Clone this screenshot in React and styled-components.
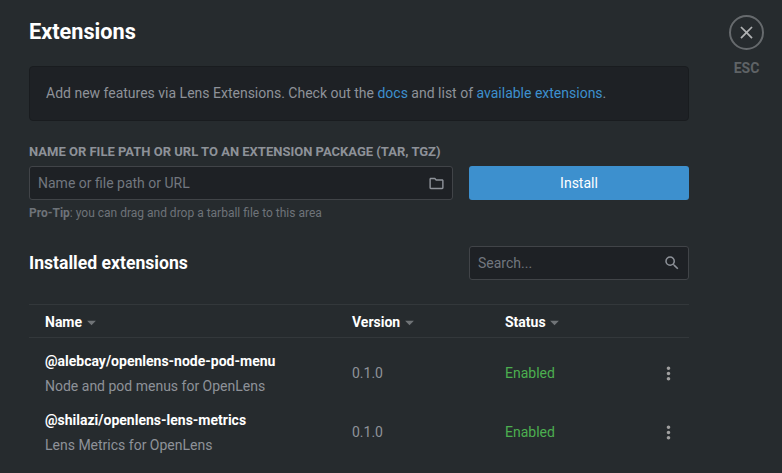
import React from "react";
import styled, { createGlobalStyle } from "styled-components";
import { MdArrowDropDown, MdClose, MdMoreVert, MdOutlineFolder, MdSearch } from "react-icons/md";

const GlobalStyle = createGlobalStyle`
  *, *::before, *::after { box-sizing: border-box; }
  body {
    margin: 0;
    background: #262b2e;
    color: #8e9299;
    font: 14px/20px Roboto, sans-serif;
    overflow: hidden;
  }
  h1, h2, p { margin: 0; }
`;

const Page = styled.div`
  display: flex;
  width: 782px;
  height: 473px;
  background: #262b2e;
`;

const Content = styled.main`
  display: flex;
  flex-direction: column;
  width: 660px;
  margin-left: 29px;
  padding-top: 18px;
`;

const Title = styled.h1`
  color: #fff;
  font-size: 21.7px;
  line-height: 28px;
  font-weight: 700;
`;

const Notice = styled.p`
  height: 55px;
  margin-top: 20px;
  padding: 16px;
  border: 1px solid #191c1f;
  border-radius: 4px;
  background: #1e2125;
`;

const Link = styled.a`
  color: #3d90ce;
  text-decoration: none;
`;

const Label = styled.label`
  margin-top: 21px;
  font-size: 13px;
  font-weight: 700;
  text-transform: uppercase;
`;

const InstallRow = styled.div`
  display: grid;
  grid-template-columns: 424px 220px;
  column-gap: 16px;
  margin-top: 4px;
`;

const Field = styled.div`
  display: flex;
  align-items: center;
  height: 34px;
  padding: 0 7px 0 8px;
  border: 1px solid #414448;
  border-radius: 3px;
  background: #1e2125;
  svg { flex: none; }
`;

const Input = styled.input`
  flex: 1;
  min-width: 0;
  padding: 0;
  border: 0;
  outline: 0;
  background: transparent;
  color: #8e9299;
  font: inherit;
  &::placeholder { color: #72777f; opacity: 1; }
`;

const InstallButton = styled.button`
  height: 34px;
  padding: 0;
  border: 0;
  border-radius: 3px;
  background: #3d90ce;
  color: #fff;
  font: inherit;
`;

const Hint = styled.p`
  margin-top: 5px;
  color: #6e7379;
  font-size: 12px;
  line-height: 16px;
  b { font-weight: 700; }
`;

const SectionHeader = styled.div`
  display: grid;
  grid-template-columns: 1fr 220px;
  align-items: center;
  margin-top: 25px;
`;

const SectionTitle = styled.h2`
  color: #fff;
  font-size: 17.6px;
  line-height: 24px;
  font-weight: 700;
`;

const Table = styled.div`
  margin-top: 24px;
`;

const Row = styled.div`
  display: grid;
  grid-template-columns: 307px 153px 1fr 31px;
  align-items: center;
  height: 59px;
  padding-left: 16px;
`;

const HeaderRow = styled(Row)`
  height: 34px;
  margin-bottom: 6px;
  border-top: 1px solid #33383b;
  border-bottom: 1px solid #33383b;
  color: #fff;
  font-weight: 700;
`;

const HeaderCell = styled.div`
  display: flex;
  align-items: center;
  padding-top: 2px;
  svg {
    margin-left: -1.5px;
    color: #707477;
  }
`;

const Name = styled.div`
  color: #fff;
  font-weight: 700;
`;

const Description = styled.div`
  margin-top: 5px;
`;

const Value = styled.div`
  padding-bottom: 2px;
`;

const Status = styled(Value)`
  color: #4caf50;
`;

const MenuIcon = styled(MdMoreVert)`
  color: #a0a0a0;
`;

const CloseArea = styled.aside`
  display: flex;
  flex-direction: column;
  align-items: center;
  width: 35px;
  margin: 15px 0 0 40px;
  color: #5f6366;
  font-weight: 700;
`;

const CloseButton = styled.button`
  display: flex;
  align-items: center;
  justify-content: center;
  width: 35px;
  height: 35px;
  margin-bottom: 8px;
  padding: 0;
  border: 2px solid #666a6d;
  border-radius: 50%;
  background: transparent;
  color: #b0b2b3;
`;

const extensions = [
  { name: "@alebcay/openlens-node-pod-menu", description: "Node and pod menus for OpenLens" },
  { name: "@shilazi/openlens-lens-metrics", description: "Lens Metrics for OpenLens" },
];

export default function App() {
  return (
    <>
      <GlobalStyle />
      <Page>
        <Content>
          <Title>Extensions</Title>
          <Notice>
            Add new features via Lens Extensions. Check out the <Link>docs</Link> and list of{" "}
            <Link>available extensions</Link>.
          </Notice>
          <Label htmlFor="package">Name or file path or URL to an extension package (tar, tgz)</Label>
          <InstallRow>
            <Field>
              <Input id="package" placeholder="Name or file path or URL" />
              <MdOutlineFolder size={17} />
            </Field>
            <InstallButton>Install</InstallButton>
          </InstallRow>
          <Hint>
            <b>Pro-Tip</b>: you can drag and drop a tarball file to this area
          </Hint>
          <SectionHeader>
            <SectionTitle>Installed extensions</SectionTitle>
            <Field>
              <Input placeholder="Search..." />
              <MdSearch size={18} />
            </Field>
          </SectionHeader>
          <Table>
            <HeaderRow>
              {["Name", "Version", "Status"].map((title) => (
                <HeaderCell key={title}>
                  {title}
                  <MdArrowDropDown size={21} />
                </HeaderCell>
              ))}
            </HeaderRow>
            {extensions.map(({ name, description }) => (
              <Row key={name}>
                <div>
                  <Name>{name}</Name>
                  <Description>{description}</Description>
                </div>
                <Value>0.1.0</Value>
                <Status>Enabled</Status>
                <MenuIcon size={21} />
              </Row>
            ))}
          </Table>
        </Content>
        <CloseArea>
          <CloseButton aria-label="Close">
            <MdClose size={21} />
          </CloseButton>
          ESC
        </CloseArea>
      </Page>
    </>
  );
}
